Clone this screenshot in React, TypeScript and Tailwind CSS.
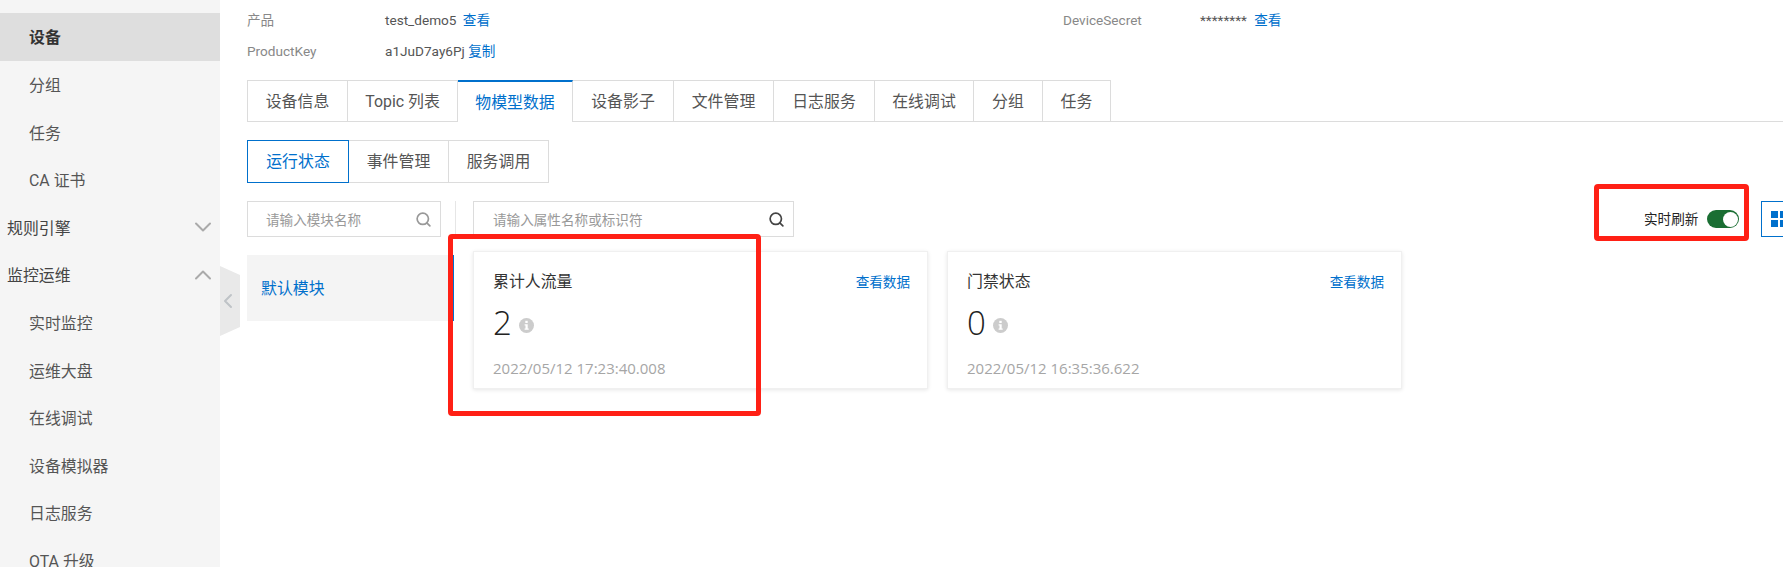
import { ChevronDown, ChevronLeft, ChevronUp, Search } from "lucide-react";

const font = "font-['Roboto','Noto_Sans_CJK_SC',sans-serif]";

const navItems = [
  { label: "设备", active: true },
  { label: "分组" },
  { label: "任务" },
  { label: "CA 证书" },
  { label: "规则引擎", top: true, icon: "down" },
  { label: "监控运维", top: true, icon: "up" },
  { label: "实时监控" },
  { label: "运维大盘" },
  { label: "在线调试" },
  { label: "设备模拟器" },
  { label: "日志服务" },
  { label: "OTA 升级" },
];

const tabs = [
  { label: "设备信息", width: "w-[101px] border-l" },
  { label: "Topic 列表", width: "w-[110px]" },
  { label: "物模型数据", width: "w-[115px]", active: true },
  { label: "设备影子", width: "w-[101px]" },
  { label: "文件管理", width: "w-[100px]" },
  { label: "日志服务", width: "w-[101px]" },
  { label: "在线调试", width: "w-[99px]" },
  { label: "分组", width: "w-[69px]" },
  { label: "任务", width: "w-[68px]" },
];

const subTabs = [
  { label: "运行状态", active: true },
  { label: "事件管理" },
  { label: "服务调用" },
];

const cards = [
  { title: "累计人流量", value: "2", time: "2022/05/12 17:23:40.008" },
  { title: "门禁状态", value: "0", time: "2022/05/12 16:35:36.622" },
];

function Sidebar() {
  return (
    <aside className="w-[220px] shrink-0 bg-[#f5f5f5] pt-[13px] text-[15.9px] text-[#555]">
      {navItems.map((item) => (
        <div
          key={item.label}
          className={`flex h-[47.6px] items-center justify-between pr-[3px] ${item.top ? "pl-[7px] text-[#444]" : "pl-[29px]"} ${
            item.active ? "bg-[#dedede] font-bold text-[#333]" : ""
          }`}
        >
          <span className="pt-[3px]">{item.label}</span>
          {item.icon === "down" && <ChevronDown size={28} strokeWidth={1.7} className="text-[#aaa]" />}
          {item.icon === "up" && <ChevronUp size={28} strokeWidth={1.7} className="text-[#aaa]" />}
        </div>
      ))}
    </aside>
  );
}

function InfoRows() {
  return (
    <div className="grid grid-cols-[138px_678px_137px_1fr] pt-[5px] text-[13.6px] leading-[31px]">
      <span className="text-[#888]">产品</span>
      <span className="text-[#555]">
        test_demo5 <a className="ml-[3px] text-[#0070cc]">查看</a>
      </span>
      <span className="text-[#888]">DeviceSecret</span>
      <span className="text-[#555]">
        ******** <a className="ml-[4px] text-[#0070cc]">查看</a>
      </span>
      <span className="text-[#888]">ProductKey</span>
      <span className="text-[#555]">
        a1JuD7ay6Pj <a className="text-[#0070cc]">复制</a>
      </span>
    </div>
  );
}

function InfoDot() {
  return (
    <svg width="15" height="15" viewBox="0 0 15 15" className="mt-[5px]">
      <circle cx="7.5" cy="7.5" r="7.5" fill="#cccccc" />
      <rect x="6.3" y="2.8" width="2.4" height="2.2" fill="#fff" />
      <path d="M5.6 6.2h3.1v4.4h1v1.2H5.6v-1.2h.9V7.4h-.9z" fill="#fff" />
    </svg>
  );
}

function Card({ title, value, time }: { title: string; value: string; time: string }) {
  return (
    <div className="h-[138px] w-[455px] border border-[#f0f0f0] pl-[19px] pr-[17px] shadow-[0_1px_4px_rgba(0,0,0,0.1)]">
      <div className="flex h-[58px] items-center justify-between pt-[2px]">
        <span className="text-[15.9px] text-[#333]">{title}</span>
        <a className="text-[13.6px] text-[#0070cc]">查看数据</a>
      </div>
      <div className="-mt-[7px] flex h-[40px] items-center gap-[7px] font-['Open_Sans',sans-serif] text-[33px] font-light text-[#222]">
        {value}
        <InfoDot />
      </div>
      <div className="mt-[14px] font-['Open_Sans',sans-serif] text-[15px] text-[#a6a6a6]">{time}</div>
    </div>
  );
}

export default function App() {
  return (
    <div className={`relative flex h-[567px] w-[1783px] overflow-hidden bg-white ${font}`}>
      <Sidebar />

      {/* collapse handle */}
      <div className="absolute left-[220px] top-[266px] flex h-[70px] w-[20px] items-center bg-[#e9e9e9] [clip-path:polygon(0_0,100%_9px,100%_61px,0_100%)]">
        <ChevronLeft size={28} strokeWidth={2} className="-ml-[4px] text-[#bfc3c7]" />
      </div>

      <main className="min-w-0 flex-1 pl-[27px]">
        <InfoRows />

        {/* tabs */}
        <div className="mt-[13px] flex h-[42px] border-b border-[#dcdcdc] text-[15.9px]">
          {tabs.map((tab) => (
            <div
              key={tab.label}
              className={`-mb-px flex shrink-0 items-center justify-center border-r border-[#dcdcdc] pt-[2px] ${tab.width} ${
                tab.active
                  ? "border-t-2 border-t-[#0070cc] bg-white text-[#0070cc]"
                  : "border-y text-[#555]"
              }`}
            >
              {tab.label}
            </div>
          ))}
        </div>

        {/* sub tabs */}
        <div className="mt-[18px] flex h-[43px] text-[15.9px]">
          {subTabs.map((tab) =>
            tab.active ? (
              <div key={tab.label} className="flex w-[102px] items-center justify-center border border-[#0070cc] text-[#0070cc]">
                {tab.label}
              </div>
            ) : (
              <div key={tab.label} className="flex w-[100px] items-center justify-center border-y border-r border-[#dcdcdc] text-[#555]">
                {tab.label}
              </div>
            )
          )}
        </div>

        {/* search row */}
        <div className="mt-[18px] flex h-[36px] text-[13.6px] text-[#999]">
          <div className="flex w-[194px] shrink-0 items-center justify-between border border-[#dcdcdc] pl-[18px] pr-[8px]">
            <span className="pt-[2px]">请输入模块名称</span>
            <Search size={17} strokeWidth={2.4} className="text-[#999]" />
          </div>
          <div className="ml-[14px] w-px shrink-0 bg-[#e6e6e6]" />
          <div className="ml-[17px] flex w-[321px] shrink-0 items-center justify-between border border-[#dcdcdc] pl-[19px] pr-[8px]">
            <span className="pt-[2px]">请输入属性名称或标识符</span>
            <Search size={17} strokeWidth={2.4} className="text-[#444]" />
          </div>
          <div className="ml-[850px] flex shrink-0 items-center">
            <span className="text-[13.6px] text-[#222]">实时刷新</span>
            <div className="ml-[9px] flex h-[18px] w-[32px] items-center justify-end rounded-full bg-[#1a6e33] pr-[1.5px]">
              <div className="h-[15px] w-[15px] rounded-full bg-white" />
            </div>
            <div className="ml-[22px] flex h-[36px] w-[40px] shrink-0 items-center border border-[#0070cc] pl-[9px]">
              <div className="grid grid-cols-[7px_7px] gap-[2px]">
                <div className="h-[7px] bg-[#0070cc]" />
                <div className="h-[7px] bg-[#0070cc]" />
                <div className="h-[7px] bg-[#0070cc]" />
                <div className="h-[7px] bg-[#0070cc]" />
              </div>
            </div>
          </div>
        </div>

        {/* module list and cards */}
        <div className="mt-[14px] flex">
          <div className="mt-[4px] flex h-[66px] w-[207px] shrink-0 items-center border-r-2 border-[#0070cc] bg-[#f4f4f4] pl-[14px] pt-[1px] text-[15.9px] text-[#0070cc]">
            默认模块
          </div>
          <div className="ml-[19px] flex gap-[19px]">
            {cards.map((card) => (
              <Card key={card.title} {...card} />
            ))}
          </div>
        </div>
      </main>

      {/* red annotation boxes */}
      <div className="absolute left-[448px] top-[234px] h-[182px] w-[313px] rounded-[4px] border-[5px] border-[#ff2015]" />
      <div className="absolute left-[1594px] top-[184px] h-[57px] w-[155px] rounded-[4px] border-[5px] border-[#ff2015]" />
    </div>
  );
}
